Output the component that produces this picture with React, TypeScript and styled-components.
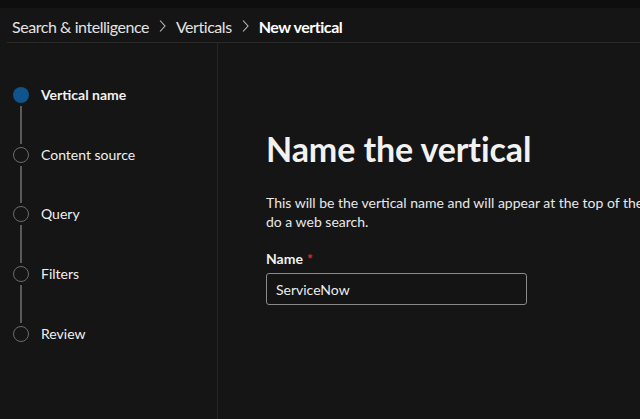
import React from "react";
import styled, { createGlobalStyle } from "styled-components";

const FONT = `Lato, "Open Sans", "Noto Sans", sans-serif`;

const Global = createGlobalStyle`
  html, body { margin: 0; padding: 0; background: #151515; overflow: hidden; }
  body { font-family: ${FONT}; color: #f2f2f2; }
  * { box-sizing: border-box; }
`;

const Page = styled.div`
  width: 640px;
  height: 419px;
  display: flex;
  flex-direction: column;
  background: #151515;
  overflow: hidden;
`;

const TopStrip = styled.div`
  height: 8px;
  background: #0e0e0e;
  flex: none;
`;

const Breadcrumb = styled.nav`
  height: 35px;
  flex: none;
  display: flex;
  align-items: center;
  padding: 2px 0 0 5px;
  gap: 9px;
  font-size: 16px;
  border-bottom: 1px solid #2a2a2a;
  margin-left: 7px;
`;

const Crumb = styled.span<{ $current?: boolean }>`
  font-weight: ${(p) => (p.$current ? 700 : 400)};
  color: ${(p) => (p.$current ? "#ffffff" : "#e3e3e3")};
  letter-spacing: -0.45px;
`;

const Chevron = styled.svg`
  width: 9px;
  height: 14px;
  flex: none;
`;

const Body = styled.div`
  flex: 1;
  display: flex;
  min-height: 0;
`;

const Sidebar = styled.aside`
  width: 218px;
  flex: none;
  border-right: 1px solid #262626;
  padding: 44px 0 0 13px;
  display: flex;
  flex-direction: column;
`;

const Step = styled.div`
  height: 59.7px;
  flex: none;
  display: grid;
  grid-template-columns: 16px 1fr;
  grid-template-rows: 16px 1fr;
  column-gap: 12px;
`;

const Dot = styled.div<{ $active?: boolean }>`
  width: 16px;
  height: 16px;
  border-radius: 50%;
  background: ${(p) => (p.$active ? "#0f548c" : "transparent")};
  border: ${(p) => (p.$active ? "none" : "1.5px solid #6b6b6b")};
`;

const Connector = styled.div`
  width: 2px;
  justify-self: center;
  background: #5a5a5a;
  margin: 3px 0 3px;
`;

const StepLabel = styled.span<{ $active?: boolean }>`
  font-size: 14px;
  line-height: 16px;
  font-weight: ${(p) => (p.$active ? 700 : 400)};
  color: #f0f0f0;
`;

const Main = styled.main`
  flex: 1;
  padding: 86px 0 0 48px;
  min-width: 0;
`;

const Title = styled.h1`
  margin: 0;
  font-size: 34px;
  line-height: 40px;
  font-weight: 700;
  color: #f2f2f2;
  letter-spacing: -0.1px;
`;

const Description = styled.p`
  margin: 24px 0 0;
  font-size: 14px;
  line-height: 19px;
  white-space: nowrap;
  color: #e8e8e8;
`;

const FieldLabel = styled.label`
  display: block;
  margin-top: 19px;
  font-size: 14px;
  line-height: 18px;
  font-weight: 700;
  color: #f0f0f0;
`;

const Required = styled.span`
  color: #d13438;
  margin-left: 4px;
`;

const Input = styled.input`
  display: block;
  margin-top: 5px;
  width: 261px;
  height: 32px;
  padding: 0 9px;
  background: #141414;
  border: 1px solid #8a8a8a;
  border-radius: 3px;
  color: #ececec;
  font-family: ${FONT};
  font-size: 14px;
  outline: none;
`;

const steps = ["Vertical name", "Content source", "Query", "Filters", "Review"];

const ChevronIcon = () => (
  <Chevron viewBox="0 0 9 14">
    <path d="M2 1.5 L7 7 L2 12.5" fill="none" stroke="#bdbdbd" strokeWidth="1.1" />
  </Chevron>
);

export default function App() {
  return (
    <Page>
      <Global />
      <TopStrip />
      <Breadcrumb>
        <Crumb>Search &amp; intelligence</Crumb>
        <ChevronIcon />
        <Crumb>Verticals</Crumb>
        <ChevronIcon />
        <Crumb $current>New vertical</Crumb>
      </Breadcrumb>
      <Body>
        <Sidebar>
          {steps.map((s, i) => (
            <Step key={s}>
              <Dot $active={i === 0} />
              <StepLabel $active={i === 0}>{s}</StepLabel>
              {i < steps.length - 1 ? <Connector /> : <span />}
            </Step>
          ))}
        </Sidebar>
        <Main>
          <Title>Name the vertical</Title>
          <Description>
            This will be the vertical name and will appear at the top of the search results page when users
            <br />
            do a web search.
          </Description>
          <FieldLabel>
            Name<Required>*</Required>
          </FieldLabel>
          <Input defaultValue="ServiceNow" />
        </Main>
      </Body>
    </Page>
  );
}
